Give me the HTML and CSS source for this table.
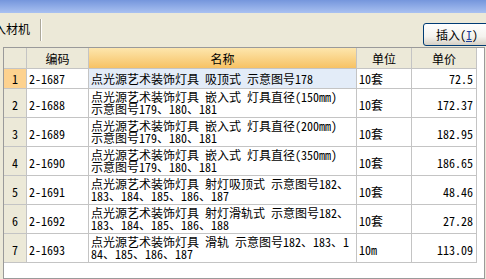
FILE: index.html
```html
<!DOCTYPE html>
<html>
<head>
<meta charset="utf-8">
<link rel="stylesheet" href="styles.css">
</head>
<body>
<div class="titlebar"></div>
<div class="toolbar">
  <div class="tab"><span class="tab-text">入材机</span></div>
  <button class="btn">插入(<u>I</u>)</button>
</div>
<div class="panel">
  <div class="grid">
    <div class="hc num"></div>
    <div class="hc">编码</div>
    <div class="hc hname">名称</div>
    <div class="hc">单位</div>
    <div class="hc">单价</div>

    <div class="c num sel r1">1</div>
    <div class="c code r1">2-1687</div>
    <div class="c name cur r1">点光源艺术装饰灯具 吸顶式 示意图号178</div>
    <div class="c unit r1">10套</div>
    <div class="c price r1">72.5</div>

    <div class="c num">2</div>
    <div class="c code">2-1688</div>
    <div class="c name">点光源艺术装饰灯具 嵌入式 灯具直径(150mm) 示意图号179、180、181</div>
    <div class="c unit">10套</div>
    <div class="c price">172.37</div>

    <div class="c num">3</div>
    <div class="c code">2-1689</div>
    <div class="c name">点光源艺术装饰灯具 嵌入式 灯具直径(200mm) 示意图号179、180、181</div>
    <div class="c unit">10套</div>
    <div class="c price">182.95</div>

    <div class="c num">4</div>
    <div class="c code">2-1690</div>
    <div class="c name">点光源艺术装饰灯具 嵌入式 灯具直径(350mm) 示意图号179、180、181</div>
    <div class="c unit">10套</div>
    <div class="c price">186.65</div>

    <div class="c num">5</div>
    <div class="c code">2-1691</div>
    <div class="c name">点光源艺术装饰灯具 射灯吸顶式 示意图号182、183、184、185、186、187</div>
    <div class="c unit">10套</div>
    <div class="c price">48.46</div>

    <div class="c num">6</div>
    <div class="c code">2-1692</div>
    <div class="c name">点光源艺术装饰灯具 射灯滑轨式 示意图号182、183、184、185、186、188</div>
    <div class="c unit">10套</div>
    <div class="c price">27.28</div>

    <div class="c num">7</div>
    <div class="c code">2-1693</div>
    <div class="c name">点光源艺术装饰灯具 滑轨 示意图号182、183、184、185、186、187</div>
    <div class="c unit">10m</div>
    <div class="c price">113.09</div>
  </div>
</div>
</body>
</html>
```
FILE: styles.css
```css
html, body {
  margin: 0;
  padding: 0;
}
body {
  width: 486px;
  height: 279px;
  overflow: hidden;
  background: #ece9d8;
  font-family: "Noto Sans Mono CJK SC", "Noto Sans CJK SC", sans-serif;
  font-size: 12px;
  color: #000;
}
.titlebar {
  height: 13px;
  background: linear-gradient(#7596dc, #a9c1f1);
}
.toolbar {
  height: 34px;
  display: flex;
  justify-content: space-between;
  align-items: flex-start;
  overflow: hidden;
}
.tab {
  margin-top: 6px;
  width: 41px;
  height: 22px;
  border-right: 1px solid #aca899;
  box-shadow: 1px 0 0 #fff;
  overflow: hidden;
  box-sizing: border-box;
  line-height: 12px;
  padding-top: 4px;
  white-space: nowrap;
}
.tab-text {
  display: inline-block;
  margin-left: -6px;
}
.btn {
  margin-top: 10px;
  margin-right: -6px;
  width: 69px;
  height: 23px;
  border: 1px solid #003c74;
  border-radius: 3px;
  background: linear-gradient(#ffffff, #f4f3ee 60%, #d6d0c5);
  font: inherit;
  font-size: 12px;
  line-height: 12px;
  padding: 0 0 0 12px;
  text-align: left;
  color: #000;
}
.btn u {
  color: #1c3f9c;
}
.panel {
  margin-left: 3px;
  width: 482px;
  height: 232px;
  box-sizing: border-box;
  border: 1px solid #9a9a9a;
  background: #fff;
}
.grid {
  display: grid;
  grid-template-columns: 23px 62px 268px 55px 65px;
  grid-template-rows: 21px 20px repeat(6, 29px);
}
.hc, .c {
  box-sizing: border-box;
  border-right: 1px solid #c4c4c4;
  border-bottom: 1px solid #c4c4c4;
  overflow: hidden;
}
.hc {
  background: #ece9d8;
  display: flex;
  align-items: center;
  justify-content: center;
  line-height: 12px;
  padding-top: 1px;
}
.hc.hname {
  background: linear-gradient(#fde6ad, #f7c264);
}
.c {
  display: flex;
  align-items: center;
  line-height: 12px;
  padding: 3px 2px 0 2px;
}
.c.r1 {
  padding-top: 1px;
}
.num {
  background: #ece9d8;
  justify-content: center;
}
.num.sel {
  background: #fdd28f;
}
.name {
  display: block;
  padding-top: 2px;
  word-break: break-all;
  line-height: 12px;
}
.name.r1 {
  padding-top: 4px;
}
.cur {
  background: #e3ecf8;
}
.price {
  justify-content: flex-end;
  padding-right: 3px;
}
```
